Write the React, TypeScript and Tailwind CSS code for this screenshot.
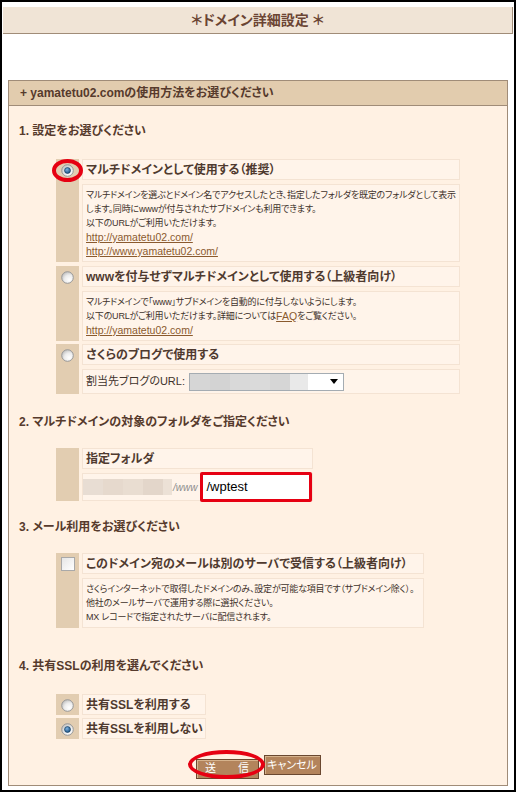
import React from "react";

const FONT = "[font-family:'Liberation_Sans','Noto_Sans_CJK_JP',sans-serif] [font-feature-settings:'palt']";

function Radio({ checked = false }: { checked?: boolean }) {
  return (
    <svg width="13" height="13" viewBox="0 0 13 13" className="block">
      <defs>
        <radialGradient id="radioFace" cx="65%" cy="70%" r="75%">
          <stop offset="0" stopColor="#ffffff" />
          <stop offset="0.55" stopColor="#ececec" />
          <stop offset="1" stopColor="#bdbdbd" />
        </radialGradient>
        <radialGradient id="radioDot" cx="40%" cy="35%" r="70%">
          <stop offset="0" stopColor="#7fb2e0" />
          <stop offset="1" stopColor="#134a7c" />
        </radialGradient>
      </defs>
      <circle cx="6.5" cy="6.5" r="5.8" fill="url(#radioFace)" stroke="#989898" strokeWidth="1" />
      {checked && <circle cx="6.5" cy="6.5" r="3" fill="url(#radioDot)" stroke="#0d3558" strokeWidth="0.6" />}
    </svg>
  );
}

function Checkbox() {
  return <div className="w-[14px] h-[14px] border border-[#a9a9a9] bg-gradient-to-br from-[#e6e6e6] to-white" />;
}

function SectionTitle({ children, className = "" }: { children: React.ReactNode; className?: string }) {
  return (
    <div className={`pl-[10px] h-[16px] leading-[16px] text-[12px] font-bold text-[#563a2c] whitespace-nowrap ${className}`}>
      {children}
    </div>
  );
}

function LabelBox({ children, width = "w-[378px]" }: { children: React.ReactNode; width?: string }) {
  return (
    <div className={`${width} h-[21px] flex items-center pl-[3px] bg-[#fff4ea] border border-[#f4e3d3] text-[12px] font-bold text-[#4f3a2f] whitespace-nowrap`}>
      {children}
    </div>
  );
}

function DescBox({ children, width = "w-[378px]", className = "" }: { children: React.ReactNode; width?: string; className?: string }) {
  return (
    <div className={`${width} bg-[#fff4ea] border border-[#f4e3d3] pl-[3px] py-[3px] text-[9px] tracking-[-0.2px] leading-[14px] text-[#3e322b] whitespace-nowrap ${className}`}>
      {children}
    </div>
  );
}

function Link({ children }: { children: React.ReactNode }) {
  return (
    <span className="inline-block align-top h-[14px] leading-[14px] text-[10.5px] tracking-normal text-[#8a5a2e] underline underline-offset-1">
      {children}
    </span>
  );
}

function Tan({ children }: { children?: React.ReactNode }) {
  return <div className="w-[23px] shrink-0 bg-[#e2cdb1] flex justify-center">{children}</div>;
}

export default function App() {
  return (
    <div className={`w-[516px] h-[792px] border-2 border-black bg-white pt-[5px] ${FONT}`}>
      <div className="mx-px h-[27px] bg-[#f0e4d6] border-b border-r border-[#a08c78] flex items-center justify-center text-[14px] font-bold text-[#6b4433]">
        ＊ドメイン詳細設定 ＊
      </div>

      <div className="mt-[46px] ml-[6px] w-[500px] border border-[#a08c78]">
        <div className="h-[25px] bg-[#e2ccae] border-b border-[#a08c78] flex items-center pl-[11px] text-[12px] font-bold text-[#563a2c]">
          + yamatetu02.comの使用方法をお選びください
        </div>

        <div className="bg-[#fff1e3] pt-[17px] pb-[6px]">
          <SectionTitle>1. 設定をお選びください</SectionTitle>

          <div className="mt-[20px] ml-[47px] flex flex-col">
            {/* option 1 */}
            <div className="flex gap-[3px]">
              <Tan>
                <div className="relative mt-[5px] h-[13px]">
                  <Radio checked />
                  <div className="absolute left-[-9px] top-[-5px] w-[31px] h-[23px] rounded-[50%] border-[4px] border-[#e60012]" />
                </div>
              </Tan>
              <div className="flex flex-col gap-[4px]">
                <LabelBox>マルチドメインとして使用する（推奨）</LabelBox>
                <DescBox>
                  <div>マルチドメインを選ぶとドメイン名でアクセスしたとき、指定したフォルダを既定のフォルダとして表示</div>
                  <div>します。同時にwwwが付与されたサブドメインも利用できます。</div>
                  <div>以下のURLがご利用いただけます。</div>
                  <div><Link>http://yamatetu02.com/</Link></div>
                  <div><Link>http://www.yamatetu02.com/</Link></div>
                </DescBox>
              </div>
            </div>

            {/* option 2 */}
            <div className="mt-[4px] flex gap-[3px]">
              <Tan>
                <div className="mt-[5px]"><Radio /></div>
              </Tan>
              <div className="flex flex-col gap-[4px]">
                <LabelBox>wwwを付与せずマルチドメインとして使用する（上級者向け）</LabelBox>
                <DescBox>
                  <div>マルチドメインで「www」サブドメインを自動的に付与しないようにします。</div>
                  <div>以下のURLがご利用いただけます。詳細については<Link>FAQ</Link>をご覧ください。</div>
                  <div><Link>http://yamatetu02.com/</Link></div>
                </DescBox>
              </div>
            </div>

            {/* option 3 */}
            <div className="mt-[3px] flex gap-[3px]">
              <Tan>
                <div className="mt-[5px]"><Radio /></div>
              </Tan>
              <div className="flex flex-col gap-[4px]">
                <LabelBox>さくらのブログで使用する</LabelBox>
                <div className="w-[378px] h-[25px] bg-[#fff4ea] border border-[#f4e3d3] pl-[3px] flex items-center text-[11px] text-[#3e322b] whitespace-nowrap">
                  <span>割当先ブログのURL:</span>
                  <div className="ml-[4px] w-[155px] h-[18px] border border-[#a5acb2] bg-white flex items-stretch">
                    <div className="w-[20px] bg-[#d6d6d6]" />
                    <div className="w-[20px] bg-[#d3d3d3]" />
                    <div className="w-[20px] bg-[#d9d9d9]" />
                    <div className="w-[20px] bg-[#dadada]" />
                    <div className="w-[20px] bg-[#d6d6d6]" />
                    <div className="w-[18px] bg-[#e9e9e9]" />
                    <div className="flex-1 flex items-center justify-end pr-[5px]">
                      <svg width="8" height="5" viewBox="0 0 8 5"><path d="M0 0h8L4 5z" fill="#000" /></svg>
                    </div>
                  </div>
                </div>
              </div>
            </div>
          </div>

          <SectionTitle className="mt-[20px]">2. マルチドメインの対象のフォルダをご指定ください</SectionTitle>

          <div className="mt-[18px] ml-[47px] flex gap-[3px]">
            <Tan />
            <div className="flex flex-col gap-[4px]">
              <LabelBox width="w-[231px]">指定フォルダ</LabelBox>
              <div className="w-[231px] h-[28px] bg-[#fff4ea] border border-[#f4e3d3] flex items-center">
                <div className="w-[89px] h-[16px] flex">
                  <div className="w-[20px] bg-[#e8ddd3]" />
                  <div className="w-[20px] bg-[#e6d9cd]" />
                  <div className="w-[20px] bg-[#e9ddd1]" />
                  <div className="w-[20px] bg-[#e3d6ca]" />
                  <div className="w-[9px] bg-[#ece1d6]" />
                </div>
                <span className="ml-px text-[10px] italic text-[#8c8c8c]">/www</span>
                <div className="ml-[3px] -my-px w-[112px] h-[30px] rounded-[2px] border-[3px] border-[#e60012] bg-white flex items-center pl-[3px] text-[13px] text-black">
                  /wptest
                </div>
              </div>
            </div>
          </div>

          <SectionTitle className="mt-[18px]">3. メール利用をお選びください</SectionTitle>

          <div className="mt-[18px] ml-[47px] flex gap-[3px]">
            <Tan>
              <div className="mt-[4px]"><Checkbox /></div>
            </Tan>
            <div className="flex flex-col gap-[4px]">
              <LabelBox width="w-[342px]">このドメイン宛のメールは別のサーバで受信する（上級者向け）</LabelBox>
              <DescBox width="w-[342px]">
                <div>さくらインターネットで取得したドメインのみ、設定が可能な項目です（サブドメイン除く）。</div>
                <div>他社のメールサーバで運用する際に選択ください。</div>
                <div>MX レコードで指定されたサーバに配信されます。</div>
              </DescBox>
            </div>
          </div>

          <SectionTitle className="mt-[30px]">4. 共有SSLの利用を選んでください</SectionTitle>

          <div className="mt-[20px] ml-[47px] flex flex-col gap-[3px]">
            <div className="flex gap-[3px]">
              <Tan>
                <div className="mt-[5px]"><Radio /></div>
              </Tan>
              <LabelBox width="w-[124px]">共有SSLを利用する</LabelBox>
            </div>
            <div className="flex gap-[3px]">
              <Tan>
                <div className="mt-[5px]"><Radio checked /></div>
              </Tan>
              <LabelBox width="w-[124px]">共有SSLを利用しない</LabelBox>
            </div>
          </div>

          <div className="mt-[16px] flex justify-center gap-[5px]">
            <div className="relative">
              <button className="w-[63px] h-[20px] bg-[#b3845c] border border-[#6a4830] shadow-[inset_1px_1px_0_#d6b38d] text-white text-[11px] leading-none">
                送　　信
              </button>
              <div className="absolute left-[-8px] top-[-5px] w-[77px] h-[29px] rounded-[50%] border-[4px] border-[#e60012]" />
            </div>
            <button className="w-[57px] h-[20px] bg-[#b3845c] border border-[#6a4830] shadow-[inset_1px_1px_0_#d6b38d] text-white text-[11px] leading-none">
              キャンセル
            </button>
          </div>
        </div>
      </div>
    </div>
  );
}
